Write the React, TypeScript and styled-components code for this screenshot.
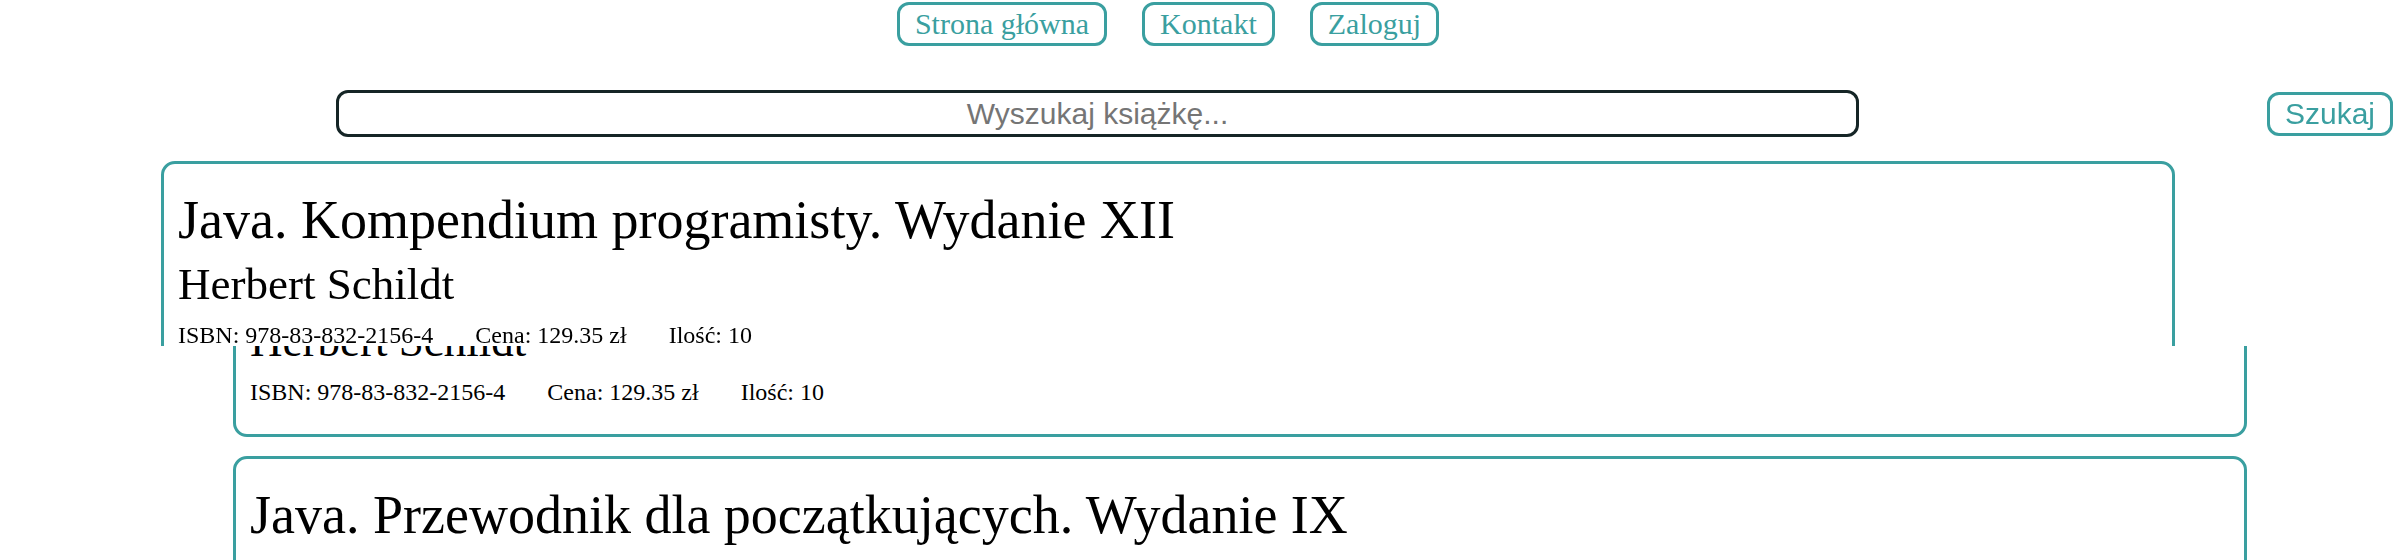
import React from "react";
import styled, { createGlobalStyle } from "styled-components";

const teal = "#3a9fa0";

const GlobalStyle = createGlobalStyle`
  html, body {
    margin: 0;
    padding: 0;
    background: #ffffff;
  }
  body {
    font-family: "Liberation Serif", "Times New Roman", serif;
    color: #000;
  }
`;

interface Book {
  title: string;
  author: string;
  isbn: string;
  price: string;
  count: number;
}

const books: Book[] = [
  {
    title: "Java. Kompendium programisty. Wydanie XII",
    author: "Herbert Schildt",
    isbn: "978-83-832-2156-4",
    price: "129.35",
    count: 10,
  },
  {
    title: "Java. Przewodnik dla początkujących. Wydanie IX",
    author: "Herbert Schildt",
    isbn: "978-83-283-9101-9",
    price: "77.35",
    count: 10,
  },
];

const Header = styled.header`
  position: fixed;
  top: 0;
  left: 0;
  right: 0;
  height: 346px;
  overflow: hidden;
  background: #ffffff;
  z-index: 10;
`;

const Nav = styled.nav`
  display: flex;
  justify-content: center;
  gap: 35px;
  padding: 2px 71px 0 0;
`;

const NavLink = styled.a`
  display: block;
  box-sizing: border-box;
  height: 44px;
  padding: 0 15px;
  border: 3px solid ${teal};
  border-radius: 12px;
  font-family: "Liberation Serif", "Times New Roman", serif;
  font-size: 30px;
  line-height: 37px;
  color: ${teal};
  text-decoration: none;
  cursor: pointer;
`;

const SearchRow = styled.form`
  display: flex;
  align-items: center;
  margin-top: 44px;
  padding: 0 14px 0 336px;
`;

const SearchInput = styled.input`
  box-sizing: border-box;
  width: 1523px;
  height: 47px;
  border: 3px solid #152526;
  border-radius: 12px;
  font-family: "Liberation Sans", Arial, sans-serif;
  font-size: 30px;
  text-align: center;
  color: #222;
  caret-color: #2a8f90;
  outline: none;
  background: #fff;

  &::placeholder {
    color: #757575;
  }
`;

const SearchButton = styled.button`
  box-sizing: border-box;
  margin-left: auto;
  height: 44px;
  padding: 0 15px;
  border: 3px solid ${teal};
  border-radius: 12px;
  background: #fff;
  font-family: "Liberation Sans", Arial, sans-serif;
  font-size: 30px;
  line-height: 36px;
  color: ${teal};
  cursor: pointer;
`;

const HeaderCardWrap = styled.div`
  margin-top: 24px;
  padding-left: 161px;
`;

const List = styled.main`
  display: flex;
  flex-direction: column;
  gap: 19px;
  padding: 218px 0 0 233px;
`;

const Card = styled.article`
  box-sizing: border-box;
  width: 2014px;
  padding: 26px 12px 28px 14px;
  border: 3px solid ${teal};
  border-radius: 14px;
  background: #fff;
`;

const Title = styled.h1`
  margin: 0;
  font-size: 54px;
  font-weight: normal;
  line-height: 60px;
`;

const Author = styled.h2`
  margin: 9px 0 0;
  font-size: 45px;
  font-weight: normal;
  line-height: 50px;
`;

const Details = styled.div`
  display: flex;
  gap: 42px;
  margin-top: 12px;
  font-size: 24px;
  line-height: 28px;
`;

const BookCard = ({ book }: { book: Book }) => (
  <Card>
    <Title>{book.title}</Title>
    <Author>{book.author}</Author>
    <Details>
      <span>ISBN: {book.isbn}</span>
      <span>Cena: {book.price} zł</span>
      <span>Ilość: {book.count}</span>
    </Details>
  </Card>
);

const App: React.FC = () => (
  <>
    <GlobalStyle />
    <Header>
      <Nav>
        <NavLink>Strona główna</NavLink>
        <NavLink>Kontakt</NavLink>
        <NavLink>Zaloguj</NavLink>
      </Nav>
      <SearchRow onSubmit={(e) => e.preventDefault()}>
        <SearchInput placeholder="Wyszukaj książkę..." autoFocus />
        <SearchButton type="submit">Szukaj</SearchButton>
      </SearchRow>
      <HeaderCardWrap>
        <BookCard book={books[0]} />
      </HeaderCardWrap>
    </Header>
    <List>
      {books.map((book) => (
        <BookCard key={book.title} book={book} />
      ))}
    </List>
  </>
);

export default App;
